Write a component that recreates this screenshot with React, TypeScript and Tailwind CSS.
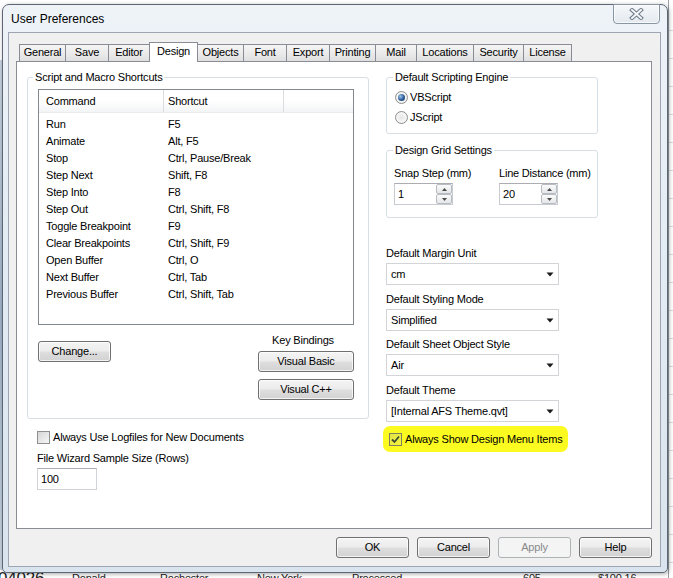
import React from "react";

const commands: [string, string][] = [
  ["Run", "F5"],
  ["Animate", "Alt, F5"],
  ["Stop", "Ctrl, Pause/Break"],
  ["Step Next", "Shift, F8"],
  ["Step Into", "F8"],
  ["Step Out", "Ctrl, Shift, F8"],
  ["Toggle Breakpoint", "F9"],
  ["Clear Breakpoints", "Ctrl, Shift, F9"],
  ["Open Buffer", "Ctrl, O"],
  ["Next Buffer", "Ctrl, Tab"],
  ["Previous Buffer", "Ctrl, Shift, Tab"],
];

const tabs: [string, number][] = [
  ["General", 47],
  ["Save", 44],
  ["Editor", 42],
  ["Design", 49],
  ["Objects", 47],
  ["Font", 44],
  ["Export", 44],
  ["Printing", 47],
  ["Mail", 42],
  ["Locations", 58],
  ["Security", 51],
  ["License", 49],
];

function Btn({
  children,
  className = "",
  disabled = false,
}: {
  children: React.ReactNode;
  className?: string;
  disabled?: boolean;
}) {
  return (
    <div
      className={
        disabled
          ? `h-[21px] flex items-center justify-center rounded-[3px] border border-[#adb2b5] bg-[#f4f4f4] text-[#8a8a8a] ${className}`
          : `h-[21px] flex items-center justify-center rounded-[3px] border border-[#707070] bg-[linear-gradient(180deg,#f4f4f4_0%,#ececec_48%,#dedede_52%,#d2d2d2_100%)] shadow-[inset_0_0_0_1px_rgba(255,255,255,0.75)] text-black ${className}`
      }
    >
      {children}
    </div>
  );
}

function Arrow() {
  return (
    <svg width="8" height="5" viewBox="0 0 8 5">
      <polygon points="0.5,0.5 7.5,0.5 4,4.5" fill="#1a1a1a" />
    </svg>
  );
}

function Select({ value }: { value: string }) {
  return (
    <div className="mt-[3px] w-[173px] h-[22px] border border-[#d2d4d8] bg-white flex items-center justify-between pl-[4px] pr-[4px]">
      <span>{value}</span>
      <Arrow />
    </div>
  );
}

function Spin({ value }: { value: string }) {
  return (
    <div className="mt-[3px] w-[59px] h-[22px] border border-[#c8cbd0] border-t-[#abadb3] bg-white flex items-center justify-between pl-[3px] pr-0">
      <span>{value}</span>
      <div className="w-[16px] h-[20px] flex flex-col">
        <div className="h-[10px] border border-[#b8bcc2] rounded-[2px] bg-[linear-gradient(180deg,#fbfbfb,#e4e6e9)] flex items-center justify-center">
          <svg width="5" height="3" viewBox="0 0 5 3">
            <polygon points="2.5,0 5,3 0,3" fill="#4a4a4a" />
          </svg>
        </div>
        <div className="h-[10px] border border-[#b8bcc2] rounded-[2px] bg-[linear-gradient(180deg,#fbfbfb,#e4e6e9)] flex items-center justify-center">
          <svg width="5" height="3" viewBox="0 0 5 3">
            <polygon points="0,0 5,0 2.5,3" fill="#4a4a4a" />
          </svg>
        </div>
      </div>
    </div>
  );
}

function Radio({ checked }: { checked?: boolean }) {
  return (
    <div className="w-[13px] h-[13px] rounded-full border border-[#8e8f8f] bg-[radial-gradient(circle_at_50%_50%,#e4e4e4_0%,#f6f6f6_60%,#d8d8d8_100%)] flex items-center justify-center">
      {checked ? (
        <div className="w-[7px] h-[7px] rounded-full bg-[radial-gradient(circle_at_35%_35%,#9cc4ec_0%,#2c5d96_55%,#0e2d58_100%)]" />
      ) : null}
    </div>
  );
}

function Check({ checked, highlight }: { checked?: boolean; highlight?: boolean }) {
  return (
    <div
      className={
        highlight
          ? "w-[13px] h-[13px] border border-[#808060] bg-[linear-gradient(135deg,#e2e24a,#f4f43a)] flex items-center justify-center"
          : "w-[13px] h-[13px] border border-[#8e8f8f] bg-[linear-gradient(135deg,#d6d6d6,#f6f6f6)] flex items-center justify-center"
      }
    >
      {checked ? (
        <svg width="9" height="9" viewBox="0 0 9 9">
          <path d="M1 4.5 L3.5 7 L8 1.5" stroke="#3d4a33" strokeWidth="1.8" fill="none" />
        </svg>
      ) : null}
    </div>
  );
}

function CloseX() {
  return (
    <svg width="15" height="12" viewBox="0 0 15 12">
      <path d="M3 2 L12 10 M12 2 L3 10" stroke="#6d7986" strokeWidth="4" strokeLinecap="square" fill="none" />
      <path d="M3 2 L12 10 M12 2 L3 10" stroke="#f4f6f9" strokeWidth="2" strokeLinecap="square" fill="none" />
    </svg>
  );
}

export default function App() {
  return (
    <div className="relative w-[673px] h-[578px] overflow-hidden bg-white font-['Liberation_Sans',Arial,sans-serif] text-[11px] leading-[13px] tracking-[-0.2px] text-black">
      {/* desktop content behind the window */}
      <div className="absolute left-[668px] top-0 w-[5px] h-[578px] border-l border-[#9aa0a6] flex flex-col pt-[30px] gap-[27px]">
        {Array.from({ length: 20 }).map((_, i) => (
          <div key={i} className="h-px bg-[#d8dce0]" />
        ))}
      </div>
      <div className="absolute left-0 top-[60px] w-[2px] h-[510px] bg-[linear-gradient(180deg,#c8d4e0,#9fb3c8,#c8d4e0)]" />
      <div className="absolute left-0 top-[569px] w-[673px] h-[20px] flex items-start text-[#222]">
        <span className="-ml-[2px] w-[74px] text-[17px] leading-[20px]">04026</span>
        <span className="w-[88px] pt-[3px]">Donald</span>
        <span className="w-[97px] pt-[3px]">Rochester</span>
        <span className="w-[95px] pt-[3px]">New York</span>
        <span className="w-[171px] pt-[3px]">Processed</span>
        <span className="w-[75px] pt-[3px]">605</span>
        <span className="pt-[3px]">$100.16</span>
      </div>

      {/* window */}
      <div className="absolute left-[2px] top-[4px] w-[666px] h-[569px] rounded-t-[7px] rounded-b-[5px] border border-[#5d6874] bg-[linear-gradient(180deg,#eef3f8_0%,#e4ecf4_40%,#d9e4ee_100%)] shadow-[1px_1px_4px_rgba(0,0,0,0.35)] flex flex-col">
        {/* title bar */}
        <div className="h-[27px] flex items-start justify-between">
          <div className="pl-[8px] pt-[7px] text-[12px] leading-[14px] tracking-normal text-black">User Preferences</div>
          <div className="-mt-px mr-[7px] w-[47px] h-[20px] rounded-b-[4px] border border-[#8895a3] bg-[linear-gradient(180deg,#f6f8fa,#e3e9ef)] shadow-[inset_0_0_0_1px_rgba(255,255,255,0.7)] flex items-center justify-center">
            <CloseX />
          </div>
        </div>

        {/* client area */}
        <div className="ml-[5px] mr-[6px] h-[535px] border border-[#9da6b0] bg-[#f0f0f0] flex flex-col">
          {/* tabs */}
          <div className="mt-[9px] ml-[10px] h-[19px] flex items-end">
            {tabs.map(([t, w], i) =>
              t === "Design" ? (
                <div
                  key={t}
                  style={{ width: w }}
                  className="relative z-10 -ml-px -mb-px h-[20px] border-t border-l border-r border-[#898c95] bg-white flex items-start justify-center pt-[2px]"
                >
                  {t}
                </div>
              ) : (
                <div
                  key={t}
                  style={{ width: w }}
                  className={`${i === 0 ? "" : "-ml-px"} h-[17px] border-t border-l border-r border-[#898c95] bg-[linear-gradient(180deg,#f5f5f5_0%,#ebebeb_50%,#dfdfdf_100%)] flex items-center justify-center pb-px`}
                >
                  {t}
                </div>
              )
            )}
          </div>

          {/* tab panel */}
          <div className="ml-[7px] mr-[8px] h-[468px] border border-[#898c95] bg-white flex pt-[15px] pl-[10px] gap-[17px]">
            {/* left column */}
            <div className="w-[342px] flex flex-col">
              <div className="border border-[#d5dfe5] rounded-[3px] pl-[10px] pb-[18px]">
                <div className="-mt-[7px] -ml-[5px] px-[2px] w-fit bg-white">Script and Macro Shortcuts</div>
                <div className="mt-[5px] w-[316px] h-[236px] border border-[#828790] bg-white">
                  <div className="h-[23px] flex bg-[linear-gradient(180deg,#ffffff_0%,#ffffff_50%,#f3f4f6_100%)] border-b border-[#eaeaea]">
                    <div className="w-[125px] border-r border-[#dcdcdc] flex items-center pl-[7px]">Command</div>
                    <div className="w-[120px] border-r border-[#dcdcdc] flex items-center pl-[4px]">Shortcut</div>
                    <div className="flex-1" />
                  </div>
                  <div className="pt-[3px]">
                    {commands.map(([c, s]) => (
                      <div key={c} className="h-[17px] flex items-center">
                        <div className="w-[125px] pl-[7px]">{c}</div>
                        <div className="pl-[4px]">{s}</div>
                      </div>
                    ))}
                  </div>
                </div>
                <div className="w-[316px] flex justify-between">
                  <Btn className="mt-[16px] w-[73px]">Change...</Btn>
                  <div className="w-[96px] flex flex-col">
                    <div className="mt-[9px] text-center pr-[6px]">Key Bindings</div>
                    <Btn className="mt-[4px]">Visual Basic</Btn>
                    <Btn className="mt-[7px]">Visual C++</Btn>
                  </div>
                </div>
              </div>

              <div className="mt-[12px] pl-[10px] flex items-center gap-[3px]">
                <Check />
                <span>Always Use Logfiles for New Documents</span>
              </div>
              <div className="mt-[8px] pl-[10px]">File Wizard Sample Size (Rows)</div>
              <div className="mt-[3px] ml-[10px] w-[60px] h-[22px] border border-[#d0d3d8] border-t-[#abadb3] bg-white flex items-center pl-[3px]">
                100
              </div>
            </div>

            {/* right column */}
            <div className="w-[212px] flex flex-col">
              <div className="border border-[#d5dfe5] rounded-[3px] pl-[8px] pb-[6px]">
                <div className="-mt-[7px] -ml-[2px] px-[2px] w-fit bg-white">Default Scripting Engine</div>
                <div className="mt-[3px] h-[20px] flex items-center gap-[2px]">
                  <Radio checked />
                  <span>VBScript</span>
                </div>
                <div className="h-[20px] flex items-center gap-[2px]">
                  <Radio />
                  <span>JScript</span>
                </div>
              </div>

              <div className="mt-[16px] border border-[#d5dfe5] rounded-[3px] pl-[7px] pb-[12px]">
                <div className="-mt-[7px] -ml-[1px] px-[2px] w-fit bg-white">Design Grid Settings</div>
                <div className="mt-[10px] flex">
                  <div className="w-[105px] flex flex-col">
                    <div>Snap Step (mm)</div>
                    <Spin value="1" />
                  </div>
                  <div className="flex flex-col">
                    <div>Line Distance (mm)</div>
                    <Spin value="20" />
                  </div>
                </div>
              </div>

              <div className="mt-[29px]">Default Margin Unit</div>
              <Select value="cm" />
              <div className="mt-[8px]">Default Styling Mode</div>
              <Select value="Simplified" />
              <div className="mt-[7px]">Default Sheet Object Style</div>
              <Select value="Air" />
              <div className="mt-[8px]">Default Theme</div>
              <Select value="[Internal AFS Theme.qvt]" />

              <div className="mt-[4px] -ml-[3px] h-[26px] w-fit px-[6px] rounded-[7px] bg-[#fbfb22] flex items-center gap-[3px]">
                <Check checked highlight />
                <span>Always Show Design Menu Items</span>
              </div>
            </div>
          </div>

          {/* buttons */}
          <div className="mt-[8px] mr-[8px] flex justify-end gap-[8px]">
            <Btn className="w-[73px]">OK</Btn>
            <Btn className="w-[73px]">Cancel</Btn>
            <Btn className="w-[73px]" disabled>
              Apply
            </Btn>
            <Btn className="w-[73px]">Help</Btn>
          </div>
        </div>
      </div>
    </div>
  );
}
